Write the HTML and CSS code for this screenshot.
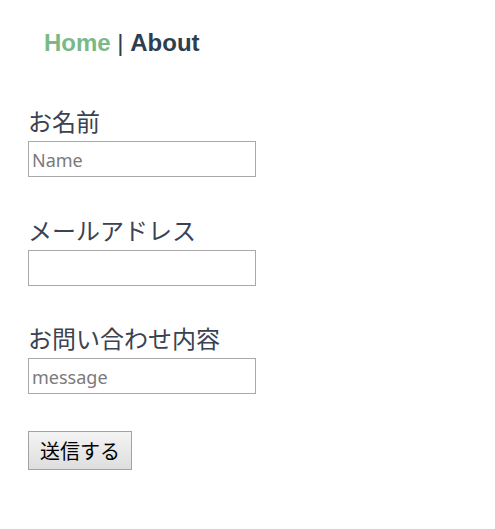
FILE: index.html
```html
<!DOCTYPE html>
<html lang="ja">
<head>
<meta charset="utf-8">
<link rel="stylesheet" href="styles.css">
</head>
<body>
<div class="app">
  <nav class="nav">
    <a class="nav-link active" href="#">Home</a><span class="sep"> | </span><a class="nav-link" href="#">About</a>
  </nav>
  <form class="form">
    <div class="group">
      <label class="label">お名前</label>
      <input class="input" type="text" placeholder="Name">
    </div>
    <div class="group">
      <label class="label">メールアドレス</label>
      <input class="input" type="text">
    </div>
    <div class="group">
      <label class="label">お問い合わせ内容</label>
      <input class="input" type="text" placeholder="message">
    </div>
    <button class="submit" type="button">送信する</button>
  </form>
</div>
</body>
</html>
```
FILE: styles.css
```css
html, body {
  background: #fff;
}
body {
  margin: 8px;
  font-family: "Liberation Sans", Arial, sans-serif;
  color: #2c3e50;
}
.nav {
  padding: 21px 36px 19px;
  font-size: 24px;
  line-height: 27px;
  font-weight: bold;
  color: #2c3e50;
}
.sep {
  font-weight: normal;
}
.nav-link {
  color: #2c3e50;
  text-decoration: none;
}
.nav-link.active {
  color: #7ab987;
}
.form {
  margin: 33px 0 0 20px;
  display: flex;
  flex-direction: column;
  align-items: flex-start;
}
.group {
  display: flex;
  flex-direction: column;
  align-items: flex-start;
  margin-bottom: 39.5px;
}
.group:last-of-type {
  margin-bottom: 37px;
}
.label {
  font-family: "Noto Sans CJK JP", "Noto Sans", sans-serif;
  font-size: 24px;
  line-height: 26px;
  color: #3b4250;
  margin-bottom: 7px;
}
.input {
  box-sizing: border-box;
  width: 228px;
  height: 36px;
  margin: 0;
  padding: 2px 3px 0;
  border: 1px solid #a9a9a9;
  border-radius: 0;
  font-family: "Noto Sans", "Noto Sans CJK JP", sans-serif;
  font-size: 18px;
  color: #333;
  background: #fff;
  outline: none;
}
.input::placeholder {
  color: #7a7a7a;
}
.submit {
  box-sizing: border-box;
  width: 104px;
  height: 39px;
  margin: 0;
  padding: 0;
  border: 1px solid #a3a3a3;
  border-radius: 0;
  background: linear-gradient(#f4f4f4, #dedede);
  font-family: "Noto Sans CJK JP", sans-serif;
  font-size: 20px;
  color: #000;
}
```
